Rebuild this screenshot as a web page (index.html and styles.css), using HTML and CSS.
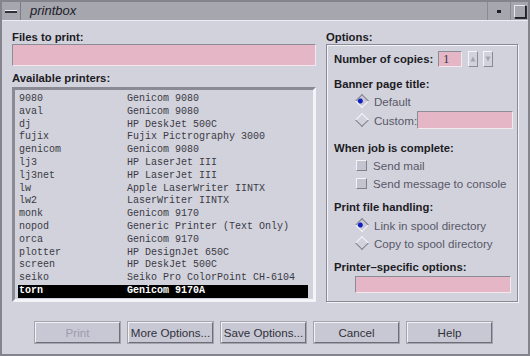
FILE: index.html
```html
<!DOCTYPE html>
<html lang="en">
<head>
    <meta charset="UTF-8">
    <title>printbox</title>
    <link rel="stylesheet" href="styles.css">
</head>
<body>
    <div class="window">
        <div class="titlebar">
            <div class="tb-menu"><span class="tb-bar"></span></div>
            <div class="tb-title">printbox</div>
            <div class="tb-min"><span class="tb-dot"></span></div>
            <div class="tb-max"><span class="tb-sq"></span></div>
        </div>

        <div class="main">
            <div class="left">
                <div class="label">Files to print:</div>
                <div class="field files"></div>
                <div class="label printers-label">Available printers:</div>
                <div class="list">
                    <div class="row"><span class="name">9080</span><span>Genicom 9080</span></div>
                    <div class="row"><span class="name">aval</span><span>Genicom 9080</span></div>
                    <div class="row"><span class="name">dj</span><span>HP DeskJet 500C</span></div>
                    <div class="row"><span class="name">fujix</span><span>Fujix Pictrography 3000</span></div>
                    <div class="row"><span class="name">genicom</span><span>Genicom 9080</span></div>
                    <div class="row"><span class="name">lj3</span><span>HP LaserJet III</span></div>
                    <div class="row"><span class="name">lj3net</span><span>HP LaserJet III</span></div>
                    <div class="row"><span class="name">lw</span><span>Apple LaserWriter IINTX</span></div>
                    <div class="row"><span class="name">lw2</span><span>LaserWriter IINTX</span></div>
                    <div class="row"><span class="name">monk</span><span>Genicom 9170</span></div>
                    <div class="row"><span class="name">nopod</span><span>Generic Printer (Text Only)</span></div>
                    <div class="row"><span class="name">orca</span><span>Genicom 9170</span></div>
                    <div class="row"><span class="name">plotter</span><span>HP DesignJet 650C</span></div>
                    <div class="row"><span class="name">screen</span><span>HP DeskJet 500C</span></div>
                    <div class="row"><span class="name">seiko</span><span>Seiko Pro ColorPoint CH-6104</span></div>
                    <div class="row selected"><span class="name">torn</span><span>Genicom 9170A</span></div>
                </div>
            </div>

            <div class="right">
                <div class="label">Options:</div>
                <div class="options">
                    <div class="copies">
                        <span class="heading">Number of copies:</span>
                        <span class="field count">1</span>
                        <span class="spin up"><svg width="6" height="6" viewBox="0 0 6 6"><polygon points="3,0.5 5.5,5.5 0.5,5.5" fill="#a4a4b2"/></svg></span>
                        <span class="spin"><svg width="6" height="6" viewBox="0 0 6 6"><polygon points="0.5,0.5 5.5,0.5 3,5.5" fill="#a4a4b2"/></svg></span>
                    </div>

                    <div class="heading banner">Banner page title:</div>
                    <div class="choice first"><span class="radio on"></span>Default</div>
                    <div class="choice custom"><span class="radio"></span>Custom:<span class="field custom-field"></span></div>

                    <div class="heading section">When job is complete:</div>
                    <div class="choice first"><span class="check"></span>Send mail</div>
                    <div class="choice"><span class="check"></span>Send message to console</div>

                    <div class="heading handling">Print file handling:</div>
                    <div class="choice first spool"><span class="radio on"></span>Link in spool directory</div>
                    <div class="choice"><span class="radio"></span>Copy to spool directory</div>

                    <div class="heading specific">Printer&#8211;specific options:</div>
                    <div class="field specific-field"></div>
                </div>
            </div>
        </div>

        <div class="buttons">
            <div class="button disabled">Print</div>
            <div class="button">More Options...</div>
            <div class="button">Save Options...</div>
            <div class="button">Cancel</div>
            <div class="button">Help</div>
        </div>
    </div>
</body>
</html>
```

FILE: styles.css
```css
body {
    margin: 0;
    background: #d0d0dc;
    font-family: "Liberation Sans", Arial, sans-serif;
}

.window {
    width: 530px;
    height: 356px;
    box-sizing: border-box;
    border: 2px solid #84848c;
    background: #d2d2dc;
    overflow: hidden;
}

/* title bar */
.titlebar {
    display: flex;
    height: 18px;
    background: #a6a6ae;
    border-bottom: 1px solid #ececf2;
}

.tb-menu {
    width: 18px;
    display: flex;
    align-items: center;
    justify-content: center;
    border-right: 1px solid #7c7c84;
}

.tb-bar {
    width: 12px;
    height: 2px;
    background: #303038;
    border-top: 1px solid #f0f0f4;
}

.tb-title {
    flex: 1;
    padding-left: 9px;
    font-style: italic;
    font-size: 13px;
    line-height: 18px;
    color: #202028;
}

.tb-min {
    width: 22px;
    display: flex;
    align-items: center;
    justify-content: center;
    border-left: 1px solid #8a8a92;
    border-right: 1px solid #8a8a92;
}

.tb-dot {
    width: 4px;
    height: 3px;
    background: #202028;
}

.tb-max {
    width: 17px;
    display: flex;
    align-items: center;
    justify-content: center;
}

.tb-sq {
    width: 10px;
    height: 11px;
    border: 1px solid #202028;
    border-top-color: #e8e8ee;
    border-left-color: #e8e8ee;
    box-shadow: 1px 1px 0 #303038;
}

/* main area */
.main {
    display: grid;
    grid-template-columns: 304px 192px;
    column-gap: 10px;
    padding-left: 10px;
}

.label,
.heading {
    font-size: 11.3px;
    font-weight: bold;
    line-height: 14px;
    color: #1c1c24;
}

.label {
    margin-top: 9px;
    height: 14px;
}

.field {
    box-sizing: border-box;
    background: #e4b6c6;
    border: 1px solid #8c8c94;
    border-bottom-color: #f2e8ee;
    border-right-color: #f2e8ee;
}

.files {
    height: 22px;
}

.printers-label {
    margin-top: 5px;
}

.list {
    margin-top: 2px;
    height: 215px;
    box-sizing: border-box;
    border: 3px solid #8a8a94;
    border-bottom-color: #f4f4f8;
    border-right-color: #f4f4f8;
    padding: 3px 5px 0 3px;
    font-family: "Liberation Mono", "Courier New", monospace;
    font-size: 10px;
    line-height: 12.8px;
    color: #3a3a44;
    overflow: hidden;
}

.row {
    display: flex;
    padding-left: 1px;
    white-space: nowrap;
}

.name {
    flex: none;
    width: 108px;
}

.row.selected {
    background: #000;
    color: #fff;
    font-weight: bold;
}

/* options panel */
.options {
    height: 258px;
    box-sizing: border-box;
    border: 1px solid #8a8a94;
    box-shadow: inset 1px 1px 0 #f4f4f8, 1px 1px 0 #f4f4f8;
    padding: 2px 0 0 7px;
}

.copies {
    display: flex;
    align-items: center;
    height: 24px;
}

.count {
    flex: none;
    width: 24px;
    height: 16px;
    margin-left: 5px;
    font-size: 12px;
    line-height: 14px;
    padding-left: 4px;
    color: #303040;
    font-family: "Liberation Serif", serif;
}

.spin {
    flex: none;
    box-sizing: border-box;
    display: flex;
    align-items: center;
    justify-content: center;
    width: 10px;
    height: 16px;
    margin-left: 5px;
    border: 1px solid #f6f6fa;
    border-right-color: #8a8a94;
    border-bottom-color: #8a8a94;
}

.spin.up {
    margin-left: 6px;
}

.banner {
    margin-top: 6px;
}

.section {
    margin-top: 12px;
}

.handling {
    margin-top: 8px;
}

.specific {
    margin-top: 8px;
}

.choice {
    display: flex;
    align-items: center;
    height: 18px;
    padding-left: 21px;
    font-size: 11.6px;
    color: #585868;
}

.choice.first {
    margin-top: 1px;
}

.choice.spool {
    margin-top: 2px;
}

.choice.custom {
    margin-top: 1px;
}

.radio {
    flex: none;
    width: 8px;
    height: 8px;
    margin: 0 7px 0 2px;
    transform: rotate(45deg);
    border: 1px solid #f4f4f8;
    border-right-color: #80808a;
    border-bottom-color: #80808a;
    background: #d2d2dc;
}

.radio.on {
    border-color: #80808a;
    border-right-color: #f4f4f8;
    border-bottom-color: #f4f4f8;
    background: radial-gradient(circle at 35% 65%, #1020c0 0 2px, #c8c8d8 3px);
}

.check {
    flex: none;
    box-sizing: border-box;
    width: 11px;
    height: 11px;
    margin: 0 6px 0 1px;
    border: 1px solid #f4f4f8;
    border-right-color: #80808a;
    border-bottom-color: #80808a;
    background: #c4c4d0;
}

.custom-field {
    flex: none;
    width: 96px;
    height: 18px;
    margin: 0 6px 0 auto;
}

.specific-field {
    margin: 2px 0 0 21px;
    width: 156px;
    height: 17px;
}

/* buttons */
.buttons {
    display: flex;
    gap: 8px;
    margin-top: 20px;
    padding-left: 33px;
}

.button {
    box-sizing: border-box;
    width: 85px;
    height: 21px;
    border: 1px solid #f2f2f6;
    border-right-color: #6e6e78;
    border-bottom-color: #6e6e78;
    box-shadow: 0 0 0 1px #a4a4ae;
    background: #c8c8d4;
    font-size: 11.6px;
    line-height: 19px;
    text-align: center;
    color: #30303a;
}

.button.disabled {
    color: #9c9cac;
}
```
